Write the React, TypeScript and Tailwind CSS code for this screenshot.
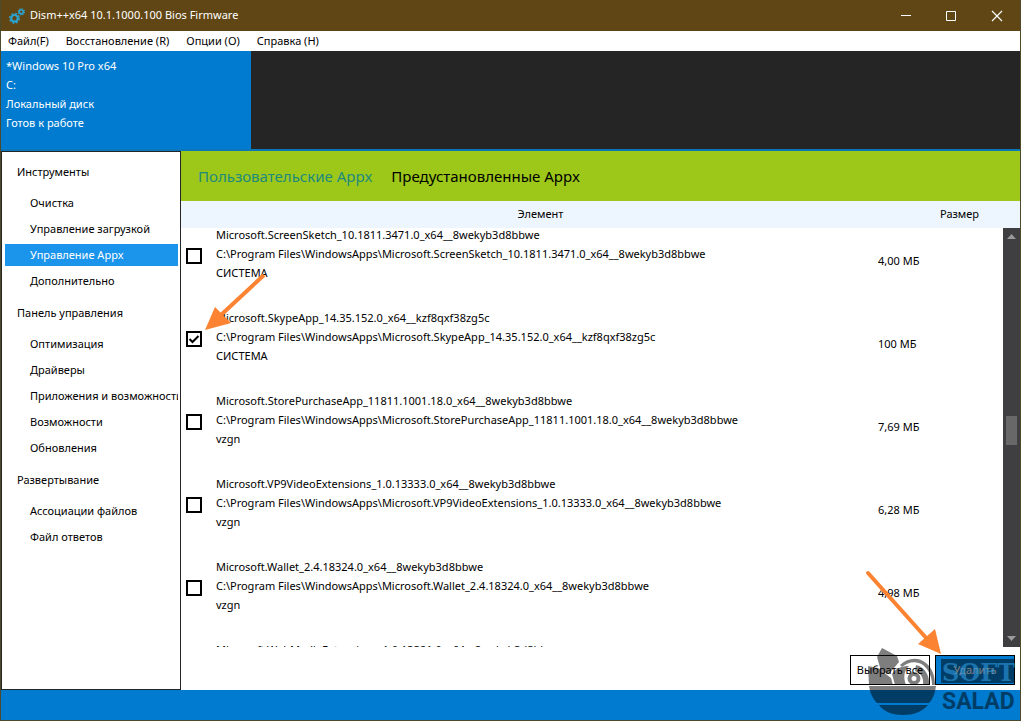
import { useState } from "react";

const menus = ["Файл(F)", "Восстановление (R)", "Опции (O)", "Справка (H)"];

const groups = [
  {
    title: "Инструменты",
    items: ["Очистка", "Управление загрузкой", "Управление Appx", "Дополнительно"],
  },
  {
    title: "Панель управления",
    items: ["Оптимизация", "Драйверы", "Приложения и возможности", "Возможности", "Обновления"],
  },
  {
    title: "Развертывание",
    items: ["Ассоциации файлов", "Файл ответов"],
  },
];

const tabs = ["Пользовательские Appx", "Предустановленные Appx"];

const apps = [
  { name: "Microsoft.ScreenSketch_10.1811.3471.0_x64__8wekyb3d8bbwe", owner: "СИСТЕМА", size: "4,00 МБ" },
  { name: "Microsoft.SkypeApp_14.35.152.0_x64__kzf8qxf38zg5c", owner: "СИСТЕМА", size: "100 МБ" },
  { name: "Microsoft.StorePurchaseApp_11811.1001.18.0_x64__8wekyb3d8bbwe", owner: "vzgn", size: "7,69 МБ" },
  { name: "Microsoft.VP9VideoExtensions_1.0.13333.0_x64__8wekyb3d8bbwe", owner: "vzgn", size: "6,28 МБ" },
  { name: "Microsoft.Wallet_2.4.18324.0_x64__8wekyb3d8bbwe", owner: "vzgn", size: "4,98 МБ" },
  { name: "Microsoft.WebMediaExtensions_1.0.13321.0_x64__8wekyb3d8bbwe", owner: "vzgn", size: "1,20 МБ" },
];

function TitleBar() {
  return (
    <header className="flex h-[31px] shrink-0 items-center bg-[#614615] pl-2 text-white">
      <svg className="h-4 w-4 text-[#2ba3d0]" viewBox="0 0 16 16" fill="none" stroke="currentColor">
        <circle cx="5.5" cy="10.3" r="3.3" strokeWidth="2.2" />
        <circle cx="5.5" cy="10.3" r="4.8" strokeWidth="1.4" strokeDasharray="2 1.77" />
        <circle cx="12.3" cy="3.8" r="2" strokeWidth="1.6" />
        <circle cx="12.3" cy="3.8" r="3.1" strokeWidth="1.1" strokeDasharray="1.3 1.13" />
      </svg>
      <h1 className="flex-1 pl-[5px]">Dism++x64 10.1.1000.100 Bios Firmware</h1>
      <div className="flex">
        <button aria-label="Свернуть" className="flex h-[31px] w-[45px] items-center justify-center">
          <svg className="h-3 w-3" viewBox="0 0 12 12" stroke="currentColor">
            <path d="M1 5.5h10" />
          </svg>
        </button>
        <button aria-label="Развернуть" className="flex h-[31px] w-[45px] items-center justify-center">
          <svg className="h-3 w-3" viewBox="0 0 12 12" fill="none" stroke="currentColor">
            <path d="M1.5 1.5h9v9h-9z" />
          </svg>
        </button>
        <button aria-label="Закрыть" className="flex h-[31px] w-[47px] items-center justify-center">
          <svg className="h-3 w-3" viewBox="0 0 12 12" stroke="currentColor" strokeWidth="1.2">
            <path d="M1 1l10 10M11 1L1 11" />
          </svg>
        </button>
      </div>
    </header>
  );
}

function Sidebar() {
  return (
    <nav className="flex w-[180px] shrink-0 flex-col gap-[7px] overflow-hidden border border-[#262525] bg-white pt-1.5 pr-0.5 pl-[3px]">
      {groups.map((group) => (
        <section key={group.title}>
          <h2 className="mb-1.5 h-7 pl-3 leading-7">{group.title}</h2>
          <ul className="flex flex-col gap-1">
            {group.items.map((item) => (
              <li key={item}>
                <a
                  href="#"
                  className={
                    item === "Управление Appx"
                      ? "block h-[22px] overflow-hidden bg-[#1b94eb] pl-[25px] leading-[22px] whitespace-nowrap text-white"
                      : "block h-[22px] overflow-hidden pl-[25px] leading-[22px] whitespace-nowrap"
                  }
                >
                  {item}
                </a>
              </li>
            ))}
          </ul>
        </section>
      ))}
    </nav>
  );
}

function ScrollBar() {
  return (
    <div className="flex w-[17px] shrink-0 flex-col">
      <div className="h-[27px] bg-[#edf6fe]" />
      <div className="flex flex-1 flex-col items-center justify-between bg-[#3f3f41] py-1.5">
        <svg className="h-[5px] w-[9px]" viewBox="0 0 9 5" fill="#999">
          <path d="M0 5L4.5 0L9 5z" />
        </svg>
        <div className="mt-[177px] mb-auto h-[29px] w-[11px] bg-[#686868]" />
        <svg className="h-[5px] w-[9px]" viewBox="0 0 9 5" fill="#999">
          <path d="M0 0L4.5 5L9 0z" />
        </svg>
      </div>
    </div>
  );
}

function AppTable() {
  const [checked, setChecked] = useState([apps[1].name]);

  function toggle(name: string) {
    setChecked(checked.includes(name) ? checked.filter((n) => n !== name) : [...checked, name]);
  }

  return (
    <div className="flex min-h-0 flex-1">
      <table className="flex min-w-0 flex-1 flex-col">
        <thead className="block bg-[#edf6fe]">
          <tr className="flex h-[27px] items-center">
            <th className="flex-1 font-normal">Элемент</th>
            <th className="w-[103px] pl-10 text-left font-normal">Размер</th>
          </tr>
        </thead>
        <tbody className="block min-h-0 flex-1 overflow-hidden">
          {apps.map((app) => (
            <tr key={app.name} className="flex h-[83px] first:-mt-[9px]">
              <td className="w-[35px] pt-[29px] pl-[5px]">
                <input
                  type="checkbox"
                  aria-label={app.name}
                  checked={checked.includes(app.name)}
                  onChange={() => toggle(app.name)}
                  className="block h-4 w-4 appearance-none border-2 border-black bg-white bg-center bg-no-repeat checked:bg-[url('data:image/svg+xml,%3Csvg%20xmlns=%22http://www.w3.org/2000/svg%22%20width=%2212%22%20height=%2212%22%3E%3Cpath%20d=%22M1.5%206l3%203%206-6%22%20fill=%22none%22%20stroke=%22black%22%20stroke-width=%222%22/%3E%3C/svg%3E')]"
                />
              </td>
              <td className="min-w-0 flex-1 pt-1.5 leading-[19px] whitespace-nowrap">
                <p>{app.name}</p>
                <p>C:\Program Files\WindowsApps\{app.name}</p>
                <p>{app.owner}</p>
              </td>
              <td className="w-[125px] leading-[83px]">{app.size}</td>
            </tr>
          ))}
        </tbody>
      </table>
      <ScrollBar />
    </div>
  );
}

function Watermark() {
  return (
    <svg
      className="pointer-events-none absolute right-1 bottom-1 h-[70px] w-[148px]"
      viewBox="0 0 148 70"
      aria-hidden="true"
    >
      <g fill="#000" opacity="0.5">
        {/* bowl */}
        <path d="M1 40H68C67 47 65 53 61 57H9C5 53 2 47 1 40z" />
        <path d="M11 59H60C54 66 45 69 35 69S16 66 11 59z" />
        {/* leaves */}
        <path d="M14 2L29 10L31 16L21 28L13 25L9 11z" />
        <path d="M0 20L10 22L23 32L25 39H1z" />
        {/* egg */}
        <path d="M32 19C40 11 51 11 58 17C65 23 67 31 67 39H64C64 31 61 24 55 19C49 15 41 15 34 21z" />
        <path d="M48 19C57 21 62 30 61 39H55C56 32 53 27 47 25z" />
        <path
          fillRule="evenodd"
          d="M46 26a6.5 6.5 0 1 0 0 13a6.5 6.5 0 1 0 0-13zM46 30a2.5 2.5 0 1 1 0 5a2.5 2.5 0 1 1 0-5z"
        />
        <path d="M24 28C28 22 34 20 41 20C36 24 35 32 38 39H27z" />
        {/* plate behind the first word */}
        <path d="M73 13H147V37H73z" />
        <text x="74" y="63" className="font-['Roboto',sans-serif] text-[23px] font-bold">
          SALAD
        </text>
      </g>
      <text x="74" y="35" fill="#2f9be0" fillOpacity="0.6" className="font-['DejaVu_Serif',serif] text-[24px] font-bold">
        SOFT
      </text>
    </svg>
  );
}

function Arrows() {
  return (
    <>
      <svg className="pointer-events-none absolute top-[270px] left-[200px] h-[64px] w-[70px]" viewBox="0 0 70 64">
        <path d="M63 5L20 45" stroke="#fb8332" strokeWidth="4" />
        <path d="M4 60L14 37L30 53z" fill="#fb8332" />
      </svg>
      <svg className="pointer-events-none absolute right-[74px] bottom-[61px] h-[90px] w-[82px]" viewBox="0 0 82 90">
        <path d="M4 4L64 71" stroke="#fb8332" strokeWidth="4" strokeLinecap="round" />
        <path d="M77 85L54 75L71 60z" fill="#fb8332" />
      </svg>
    </>
  );
}

export default function App() {
  const [tab, setTab] = useState(tabs[0]);

  return (
    <div className="relative flex h-screen flex-col overflow-hidden border-r border-b border-l border-[#4d4a2c] bg-[#017bcf] font-['Noto_Sans','Open_Sans',sans-serif] text-[11px] text-black">
      <TitleBar />
      <nav className="flex h-5 shrink-0 items-center gap-[17px] bg-white pl-[7px]">
        {menus.map((menu) => (
          <button key={menu}>{menu}</button>
        ))}
      </nav>
      <section className="flex h-[100px] shrink-0 border-b-2 border-[#0a78b8] bg-[#262525]">
        <div className="w-[250px] bg-[#017bcf] pt-[5px] pl-[5px] leading-[19px] text-white">
          <p>*Windows 10 Pro x64</p>
          <p>C:</p>
          <p>Локальный диск</p>
          <p>Готов к работе</p>
        </div>
      </section>
      <div className="flex min-h-0 flex-1">
        <Sidebar />
        <main className="flex min-w-0 flex-1 flex-col bg-white">
          <div className="flex h-[50px] shrink-0 items-center gap-[19px] bg-[#9dc81a] pl-[17px] text-[15px]">
            {tabs.map((t) => (
              <button key={t} onClick={() => setTab(t)} className={t === tab ? "text-[#1d8a7c]" : ""}>
                {t}
              </button>
            ))}
          </div>
          <AppTable />
          <div className="flex h-[43px] shrink-0 justify-end gap-[5px] px-[5px] pt-2 pb-[5px]">
            <button className="w-20 border border-black bg-white">Выбрать все</button>
            <button className="w-20 border border-black bg-[#017bcf] text-white">Удалить</button>
          </div>
        </main>
      </div>
      <footer className="h-[30px] shrink-0 bg-[#017bcf]" />
      <Watermark />
      <Arrows />
    </div>
  );
}
